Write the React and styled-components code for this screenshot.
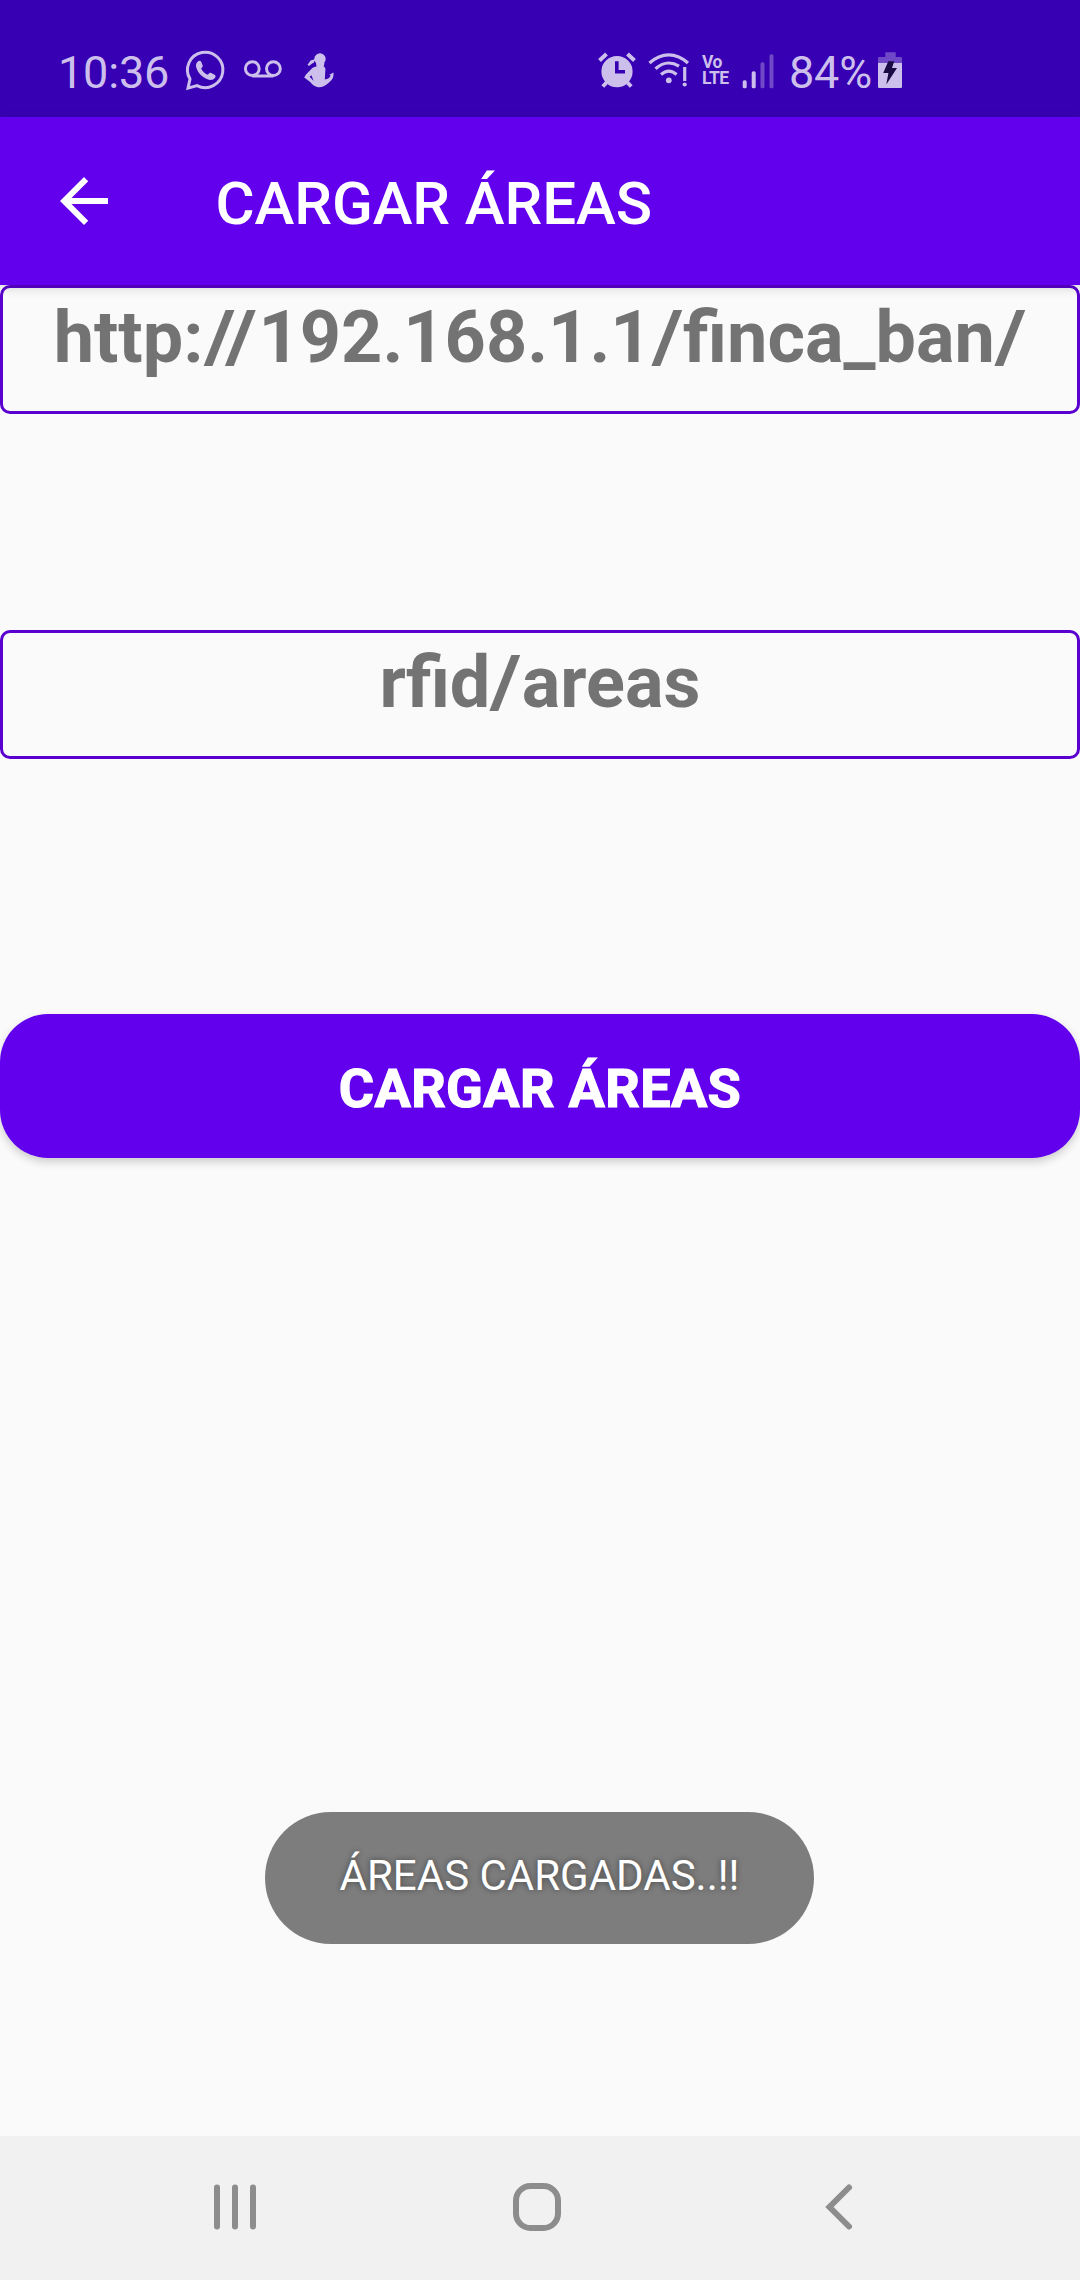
import React from 'react';
import styled, { createGlobalStyle } from 'styled-components';

const purple = '#6200ee';
const statusTint = '#cdbfec';

const GlobalStyle = createGlobalStyle`
  *, *::before, *::after { box-sizing: border-box; }
  body { margin: 0; background: #fafafa; }
`;

const Screen = styled.div`
  width: 1080px;
  height: 2280px;
  display: flex;
  flex-direction: column;
  position: relative;
  overflow: hidden;
  background: #fafafa;
  font-family: Roboto, 'Noto Sans', sans-serif;
`;

const StatusBar = styled.header`
  flex: none;
  height: 117px;
  padding: 27px 178px 0 58px;
  display: flex;
  align-items: center;
  justify-content: space-between;
  background: #3700b3;
  color: ${statusTint};
`;

const StatusGroup = styled.div`
  display: flex;
  align-items: center;
`;

const StatusText = styled.span`
  width: ${(p) => p.$width}px;
  margin-left: ${(p) => p.$gap || 0}px;
  padding-top: 2px;
  font-size: 45px;
  line-height: 90px;
  letter-spacing: -0.2px;
  white-space: nowrap;
`;

const Glyph = styled.svg`
  display: block;
  flex: none;
  width: ${(p) => p.$w}px;
  height: ${(p) => p.$h || 40}px;
  margin-left: ${(p) => p.$gap || 0}px;
  margin-bottom: ${(p) => p.$lift || 0}px;
  fill: currentColor;
  overflow: visible;
`;

const VoLte = styled.span`
  width: 30px;
  margin-left: 12px;
  padding-bottom: 4px;
  display: flex;
  flex-direction: column;
  font-size: 17.5px;
  line-height: 16px;
  font-weight: 700;
  letter-spacing: -0.5px;
`;

const AppBar = styled.div`
  flex: none;
  position: relative;
  height: 168px;
  padding-left: 48px;
  display: flex;
  align-items: center;
  gap: 95.5px;
  background: ${purple};
  color: #fff;
  box-shadow: 0 3px 10px rgba(0, 0, 0, 0.16);
`;

const Title = styled.h1`
  margin: 0;
  padding-top: 5px;
  font-size: 60px;
  line-height: 70px;
  font-weight: 500;
  letter-spacing: -0.1px;
`;

const Content = styled.main`
  flex: 1;
  display: flex;
  flex-direction: column;
`;

const Field = styled.div`
  height: 129px;
  margin-bottom: ${(p) => p.$after}px;
  border: 3px solid #5900d0;
  border-radius: 10px;
  color: #737373;
  font-size: 72px;
  line-height: 99px;
  font-weight: 700;
  text-align: center;
  white-space: nowrap;
`;

const Slash = styled.span`
  display: inline-block;
  width: ${(p) => p.$width || 31.5}px;
  text-align: center;
  transform: scaleX(1.17);
`;

const LoadButton = styled.button`
  height: 144px;
  padding: 5px 0 0;
  border: 0;
  border-radius: 48px;
  background: ${purple};
  color: #fff;
  font: 700 54px/64px Roboto, sans-serif;
  letter-spacing: 0.35px;
  -webkit-text-stroke: 1.2px #fff;
  box-shadow: 0 4px 8px rgba(0, 0, 0, 0.18);
`;

const Toast = styled.div`
  position: absolute;
  left: 265px;
  top: 1812px;
  width: 549px;
  height: 132px;
  padding-bottom: 5px;
  display: flex;
  align-items: center;
  justify-content: center;
  border-radius: 66px;
  background: #7d7d7d;
  color: #fff;
  font-size: 42px;
  text-shadow: 0 0 6px rgba(0, 0, 0, 0.45);
  white-space: nowrap;
`;

const NavBar = styled.nav`
  flex: none;
  height: 144px;
  padding: 0 0 2px 213px;
  display: flex;
  align-items: center;
  background: #f1f1f1;
  color: #8d8d8d;
`;

function WhatsAppIcon() {
  return (
    <Glyph $w={40} $lift={4} viewBox="0 0 40 40">
      <path d="M4 29 A17.7 17.7 0 1 1 11 35.6 L2 38.2 Z" fill="none" stroke="currentColor" strokeWidth="3" strokeLinejoin="miter" />
      <path d="M12.2 11.2 C13.3 10.4 14.7 10.7 15.2 11.8 L16.6 15.2 C17 16.4 16.7 17 15.1 18.6 C16.5 21.6 18.7 23.6 21.8 24.8 C23.5 23 24 22.5 25.1 23 L28.6 24.7 C30 25.5 29.7 26.8 28.9 28 C27 30.5 23.6 30.2 20.8 28.9 C15.6 26.6 12 22.8 10.4 18 C9.4 15 10.2 12.7 12.2 11.2 Z" />
    </Glyph>
  );
}

function VoicemailIcon() {
  return (
    <Glyph $w={38} $gap={18} $lift={4} viewBox="0 0 38 40">
      <g fill="none" stroke="currentColor" strokeWidth="3">
        <circle cx="8.3" cy="18.6" r="6.9" />
        <circle cx="29.4" cy="18.6" r="6.9" />
        <path d="M8.3 26 H29.4" />
      </g>
    </Glyph>
  );
}

function PersonIcon() {
  return (
    <Glyph $w={30} $gap={22} $lift={4} viewBox="0 0 30 40">
      <circle cx="16" cy="9" r="5.7" />
      <path d="M11.5 9 L10 12.3 L4.8 16 L3.6 14.8 L6.5 10.6 Z" />
      <path fillRule="evenodd" d="M12 13 H20.5 L19.7 16.5 Q22 17.5 21.3 21 L20.8 29.5 Q25.5 29 26.7 25.5 L25.3 24.7 L29.6 22.5 Q29.7 29.5 25.5 32 Q20 37.6 14 37.2 Q9.5 36.4 6.2 32 L0.2 27.6 L1.8 24.8 L8.3 18 Q10 16.5 12.5 16.5 Z M7.4 25.3 L5.6 26.8 L9.7 31 Z" />
    </Glyph>
  );
}

function AlarmIcon() {
  return (
    <Glyph $w={38} $lift={4} viewBox="0 0 38 40">
      <path fillRule="evenodd" d="M19 6 A15.6 15.6 0 1 0 19 37.2 A15.6 15.6 0 1 0 19 6 Z M17 11.2 V23.5 H27 V20 H20.6 V11.2 Z" />
      <path d="M1.5 10.5 L8.5 4 M29.5 4 L36.5 10.5 M9 32 L4.8 36.5 M29 32 L33.2 36.5" fill="none" stroke="currentColor" strokeWidth="4" />
    </Glyph>
  );
}

function WifiIcon() {
  return (
    <Glyph $w={42} $gap={12} $lift={4} viewBox="0 0 42 40">
      <g fill="none" stroke="currentColor" strokeWidth="3.2">
        <path d="M1.5 13 Q10.5 4.8 20.8 4.8 Q31 4.8 40 13" />
        <path d="M7.5 18.7 Q14 13 20.8 13 Q26 13 31 16.2" />
        <path d="M13 24.5 Q20.8 17.7 28.6 24.5" />
        <path d="M36.7 17 V31" />
      </g>
      <circle cx="20.8" cy="30.3" r="2.9" />
      <circle cx="36.7" cy="34.5" r="2.1" />
    </Glyph>
  );
}

function SignalIcon() {
  return (
    <Glyph $w={32} $gap={10} viewBox="0 0 32 40">
      <rect x="0.7" y="28.3" width="4" height="8" rx="1.6" />
      <rect x="9.7" y="19.3" width="4" height="17" rx="1.6" />
      <g opacity="0.38">
        <rect x="18.5" y="10.3" width="4" height="26" rx="1.6" />
        <rect x="27.5" y="2.3" width="4" height="34" rx="1.6" />
      </g>
    </Glyph>
  );
}

function BatteryIcon() {
  return (
    <Glyph $w={24} viewBox="0 0 24 40">
      <path d="M7.3 0.3 H17.7 V5 H23 Q24 5 24 6 V11 H0 V6 Q0 5 1 5 H7.3 Z" opacity="0.38" />
      <path d="M0 11 H24 V34.7 Q24 36 22.7 36 H1.3 Q0 36 0 34.7 Z" />
      <path d="M10.3 9.3 H16.2 L14 16 H19 L8.3 32.5 L10.4 21 H5.2 Z" fill="#1a0b45" />
    </Glyph>
  );
}

function BackArrow() {
  return (
    <Glyph $w={72} $h={72} viewBox="0 0 24 24">
      <path d="M20 11H7.83l5.59-5.59L12 4l-8 8 8 8 1.41-1.41L7.83 13H20v-2z" />
    </Glyph>
  );
}

export default function App() {
  return (
    <>
      <GlobalStyle />
      <Screen>
        <StatusBar>
          <StatusGroup>
            <StatusText $width={128}>10:36</StatusText>
            <WhatsAppIcon />
            <VoicemailIcon />
            <PersonIcon />
          </StatusGroup>
          <StatusGroup>
            <AlarmIcon />
            <WifiIcon />
            <VoLte>
              <span>Vo</span>
              <span>LTE</span>
            </VoLte>
            <SignalIcon />
            <StatusText $width={89} $gap={15}>84%</StatusText>
            <BatteryIcon />
          </StatusGroup>
        </StatusBar>

        <AppBar>
          <BackArrow />
          <Title>CARGAR ÁREAS</Title>
        </AppBar>

        <Content>
          <Field $after={216}>
            http:<Slash $width={55}>//</Slash>192.168.1.1<Slash>/</Slash>finca_ban<Slash>/</Slash>
          </Field>
          <Field $after={255}>
            rfid<Slash>/</Slash>areas
          </Field>
          <LoadButton type="button">CARGAR ÁREAS</LoadButton>
        </Content>

        <Toast>ÁREAS CARGADAS..!!</Toast>

        <NavBar>
          <Glyph $w={44} $h={48} viewBox="0 0 44 48">
            <path d="M4 4.5 V43.5 M22 4.5 V43.5 M40 4.5 V43.5" fill="none" stroke="currentColor" strokeWidth="6" strokeLinecap="round" />
          </Glyph>
          <Glyph $w={48} $h={48} $gap={256} viewBox="0 0 48 48">
            <rect x="3" y="3" width="42" height="42" rx="14.5" fill="none" stroke="currentColor" strokeWidth="6" />
          </Glyph>
          <Glyph $w={28} $h={48} $gap={264} viewBox="0 0 28 48">
            <path d="M24 4.5 L4.5 24 L24 43.5" fill="none" stroke="currentColor" strokeWidth="6" strokeLinecap="round" />
          </Glyph>
        </NavBar>
      </Screen>
    </>
  );
}
